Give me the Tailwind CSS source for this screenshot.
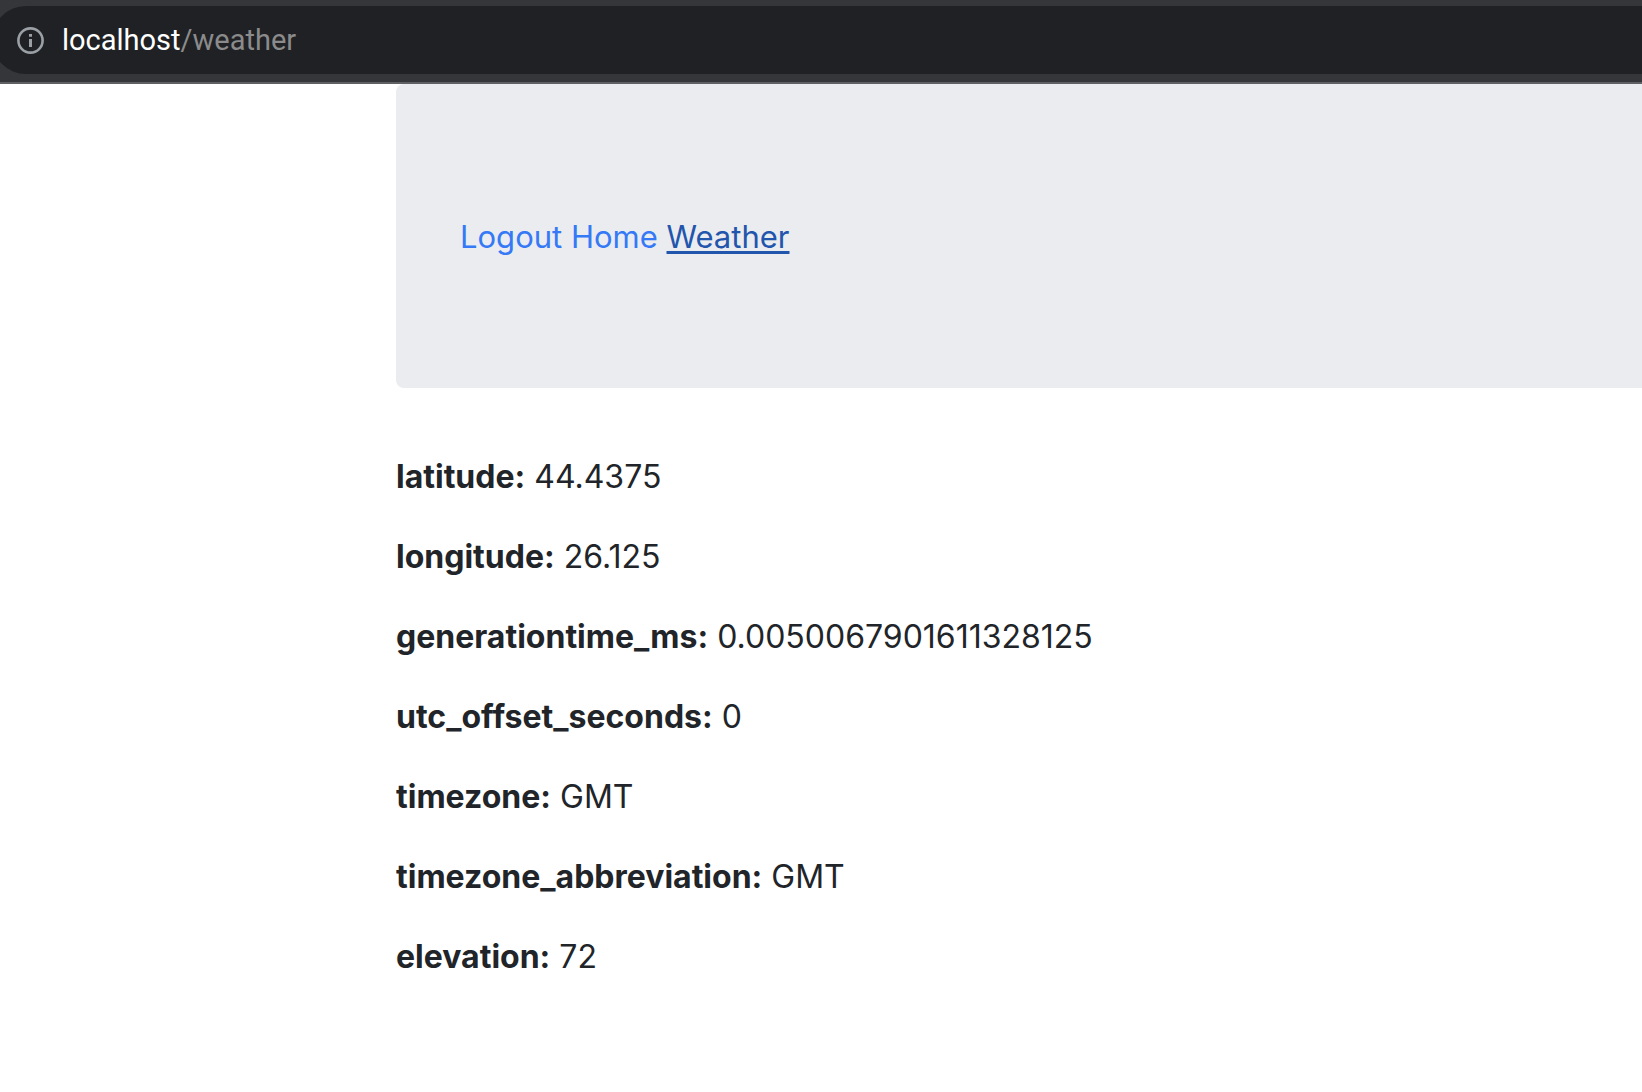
<!DOCTYPE html>
<html lang="en">
<head>
<meta charset="utf-8">
<title>Weather</title>
<script src="https://cdn.jsdelivr.net/npm/@tailwindcss/browser@4"></script>
</head>
<body class="bg-white text-[#212529] font-['Inter',sans-serif] overflow-x-hidden">
<header class="h-[84px] bg-[#35363a] pt-[6px] border-b-2 border-[#5f6063] overflow-hidden">
  <div class="-ml-2 h-[68px] bg-[#202124] rounded-l-full flex items-center pl-6 gap-[18px]">
    <button aria-label="Site information" class="size-7 shrink-0">
      <svg viewBox="0 0 28 28" class="size-7" fill="none" stroke="#9aa0a6"><circle cx="14.5" cy="14.5" r="12.1" stroke-width="2.6"/><path d="M14.5 13v8M14.5 8v2.8" stroke-width="3"/></svg>
    </button>
    <a href="/weather" class="text-[29px] leading-9 font-['Roboto',sans-serif] text-[#8b8b8c]"><span class="text-white">localhost</span>/weather</a>
  </div>
</header>
<main class="ml-[396px]">
  <nav class="bg-[#ebecf0] rounded-l-lg px-16 pt-[129px] pb-[127px] text-[31px] leading-12 text-[#3579f6]">
    <a href="/logout">Logout</a> <a href="/">Home</a> <a href="/weather" class="text-[#2255ac] underline decoration-3 underline-offset-3">Weather</a>
  </nav>
  <div class="pt-[65px] space-y-8 text-[32px] leading-12">
    <p><strong>latitude:</strong> 44.4375</p>
    <p><strong>longitude:</strong> 26.125</p>
    <p><strong>generationtime_ms:</strong> 0.0050067901611328125</p>
    <p><strong>utc_offset_seconds:</strong> 0</p>
    <p><strong>timezone:</strong> GMT</p>
    <p><strong>timezone_abbreviation:</strong> GMT</p>
    <p><strong>elevation:</strong> 72</p>
  </div>
</main>
</body>
</html>
